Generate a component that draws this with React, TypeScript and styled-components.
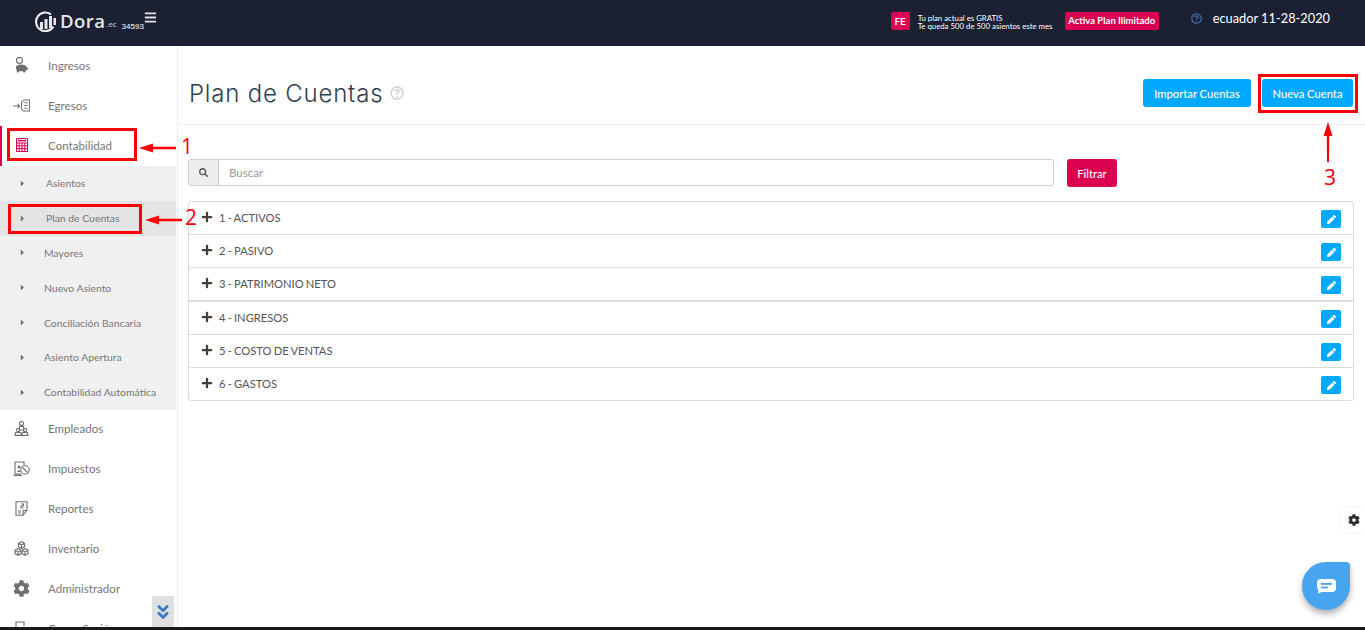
import React from 'react';
import styled, { createGlobalStyle } from 'styled-components';
import { FaCog, FaSearch, FaPlus, FaPen, FaBars, FaCaretRight, FaAngleDoubleDown } from 'react-icons/fa';

const SANS = `Lato, "Open Sans", "Liberation Sans", sans-serif`;
const CRIMSON = '#dc0050';
const BLUE = '#00a8ff';
const RED = '#fb0007';

const GlobalStyle = createGlobalStyle`
  html, body { margin: 0; padding: 0; height: 100%; overflow: hidden; background: #fff; }
  #root { height: 100%; }
  * { box-sizing: border-box; }
`;

const Page = styled.div`
  position: relative;
  display: flex;
  flex-direction: column;
  width: 1365px;
  height: 630px;
  overflow: hidden;
  font-family: ${SANS};
`;

const TopBar = styled.header`
  flex: 0 0 46px;
  display: flex;
  align-items: flex-start;
  background: #1b2132;
  color: #fff;
`;

const Logo = styled.div`
  display: flex;
  align-items: flex-end;
  width: 111px;
  height: 32px;
  margin-left: 33px;
  white-space: nowrap;
`;

const LogoWord = styled.span`
  font-family: "Open Sans", sans-serif;
  font-size: 18.5px;
  line-height: 22px;
  font-weight: 600;
  letter-spacing: 0.5px;
  color: #e6e7ea;
  margin-left: 2px;
`;

const LogoSuffix = styled.span`
  font-size: 8px;
  font-weight: 700;
  color: #aeb1b8;
  margin: 0 0 3px 1px;
`;

const TenantId = styled.span`
  font-family: "Liberation Sans", sans-serif;
  font-size: 8px;
  margin: 0 0 1px 5px;
  color: #fff;
`;

const MenuToggle = styled.div`
  display: flex;
  margin: 11px 0 0 0;
  color: #dfe0e4;
  font-size: 13px;
`;

const TopRight = styled.div`
  display: flex;
  align-items: flex-start;
  margin-left: auto;
  padding: 12px 35px 0 0;
`;

const FeBadge = styled.span`
  width: 19px;
  height: 18px;
  border-radius: 2px;
  background: ${CRIMSON};
  font-size: 10px;
  font-weight: 700;
  line-height: 18px;
  text-align: center;
`;

const PlanNote = styled.div`
  width: 135px;
  margin: 2px 12px 0 8px;
  font-size: 7.8px;
  line-height: 8px;
  white-space: nowrap;
`;

const ActivateButton = styled.span`
  width: 94px;
  height: 18px;
  border-radius: 2px;
  background: ${CRIMSON};
  font-size: 9.5px;
  font-weight: 700;
  line-height: 18px;
  text-align: center;
  white-space: nowrap;
`;

const HelpMark = styled.span`
  width: 11px;
  height: 11px;
  margin: 1px 11px 0 32px;
  color: #4d74b5;
  display: flex;
`;

const DateText = styled.span`
  font-size: 12.8px;
  line-height: 13px;
  white-space: nowrap;
`;

const Body = styled.div`
  flex: 1;
  display: flex;
  min-height: 0;
`;

const Sidebar = styled.nav`
  position: relative;
  flex: 0 0 178px;
  border-right: 1px solid #eeeef0;
  overflow: hidden;
`;

const NavItem = styled.div<{ $active?: boolean }>`
  display: flex;
  align-items: center;
  height: 40px;
  padding: 0 0 2px 11px;
  border-left: 2px solid ${p => (p.$active ? CRIMSON : 'transparent')};
  color: #777;
  font-size: 11.6px;
`;

const NavIcon = styled.span<{ $active?: boolean }>`
  display: flex;
  justify-content: center;
  width: 17px;
  margin-right: 18px;
  font-size: 17px;
  color: ${p => (p.$active ? CRIMSON : '#6f6f6f')};
`;

const SubMenu = styled.div`
  width: 176px;
  background: #f0f0f0;
`;

const SubItem = styled.div<{ $active?: boolean; $wide?: boolean }>`
  display: flex;
  align-items: center;
  height: 34.8px;
  padding-left: 18px;
  background: ${p => (p.$active ? '#e4e4e4' : 'transparent')};
  color: #777;
  font-size: 10.4px;
  svg { flex: none; color: #6f6f6f; font-size: 9px; margin-right: ${p => (p.$wide ? 19 : 17)}px; }
`;

const ScrollDown = styled.div`
  position: absolute;
  left: 152px;
  bottom: 0;
  display: flex;
  align-items: center;
  justify-content: center;
  width: 22px;
  height: 31px;
  background: #e0e0e0;
  color: #3a7cc4;
  font-size: 18px;
`;

const Main = styled.main`
  flex: 1;
  min-width: 0;
`;

const PageHead = styled.div`
  display: flex;
  align-items: center;
  height: 79px;
  padding: 16px 12px 0 11px;
  border-bottom: 1px solid #eeeef3;
`;

const Title = styled.h1`
  margin: 0;
  font-family: Inter, ${SANS};
  font-size: 24px;
  font-weight: 300;
  letter-spacing: 0.8px;
  color: #2f4050;
`;

const TitleHelp = styled.span`
  display: flex;
  margin: 0 auto 0 7px;
  color: #cfcfcf;
`;

const Button = styled.button<{ $width: number; $color?: string; $gapLeft?: number }>`
  width: ${p => p.$width}px;
  height: 28px;
  margin-left: ${p => p.$gapLeft ?? 0}px;
  border: none;
  border-radius: 3px;
  padding: 0;
  background: ${p => p.$color ?? BLUE};
  color: #fff;
  font-family: ${SANS};
  font-size: 11.2px;
  font-weight: 500;
`;

const Content = styled.div`
  padding: 34px 11px 0 10px;
`;

const FilterRow = styled.div`
  display: flex;
  align-items: flex-start;
  margin-bottom: 14px;
`;

const SearchAddon = styled.span`
  display: flex;
  align-items: center;
  justify-content: center;
  width: 31px;
  height: 27px;
  border: 1px solid #cfcfcf;
  border-radius: 3px 0 0 3px;
  background: #eee;
  color: #555;
  font-size: 9px;
`;

const SearchInput = styled.div`
  width: 836px;
  height: 27px;
  margin: 0 13px 0 -1px;
  padding-left: 10px;
  border: 1px solid #cfcfcf;
  border-radius: 0 3px 3px 0;
  background: #fff;
  color: #999;
  font-size: 11.5px;
  line-height: 25px;
`;

const Tree = styled.div`
  width: 1166px;
  border: 1px solid #dcdcdc;
  border-radius: 3px;
`;

const TreeRow = styled.div<{ $thick?: boolean }>`
  display: flex;
  align-items: center;
  height: ${p => (p.$thick ? 34 : 33)}px;
  padding: 0 12px 2px 12px;
  border-bottom: ${p => (p.$thick ? 2 : 1)}px solid #dcdcdc;
  color: #555;
  font-size: 11.2px;
  word-spacing: -0.7px;
  &:last-child { border-bottom: none; height: 32px; }
`;

const Plus = styled.span`
  display: flex;
  width: 18px;
  color: #463f38;
  font-size: 12px;
`;

const EditButton = styled.span`
  display: flex;
  align-items: center;
  justify-content: center;
  width: 20px;
  height: 18px;
  margin: 4px 0 0 auto;
  border-radius: 2px;
  background: ${BLUE};
  color: #fff;
  font-size: 9px;
`;

const BottomStrip = styled.div`
  flex: 0 0 3px;
  background: #1d1a1b;
`;

const SettingsTab = styled.div`
  position: absolute;
  right: 0;
  top: 508px;
  display: flex;
  align-items: center;
  justify-content: center;
  width: 23px;
  height: 24px;
  border-radius: 3px 0 0 3px;
  background: #fff;
  color: #2a2a33;
  font-size: 12px;
  box-shadow: 0 0 4px rgba(0, 0, 0, 0.08);
`;

const ChatBubble = styled.div`
  position: absolute;
  left: 1302px;
  top: 562px;
  display: flex;
  align-items: center;
  justify-content: center;
  width: 48px;
  height: 48px;
  border-radius: 50% 4px 50% 50%;
  background: #46a5ee;
  box-shadow: 0 4px 6px rgba(0, 0, 0, 0.3);
`;

// red marks someone drew on top of the screenshot
const MarkBox = styled.div<{ $x: number; $y: number; $w: number; $h: number }>`
  position: absolute;
  left: ${p => p.$x}px;
  top: ${p => p.$y}px;
  width: ${p => p.$w}px;
  height: ${p => p.$h}px;
  border: 3px solid ${RED};
`;

const MarkNumber = styled.span<{ $x: number; $y: number }>`
  position: absolute;
  left: ${p => p.$x}px;
  top: ${p => p.$y}px;
  color: ${RED};
  font-family: "Open Sans", sans-serif;
  font-size: 21px;
  line-height: 24px;
`;

const MarkArrow = styled.svg<{ $x: number; $y: number }>`
  position: absolute;
  left: ${p => p.$x}px;
  top: ${p => p.$y}px;
`;

const HorizontalArrow = ({ x, y }: { x: number; y: number }) => (
  <MarkArrow $x={x} $y={y} width="37" height="10" viewBox="0 0 37 10">
    <path d="M0 5 L14 0.5 L14 3.8 L37 3.8 L37 6.2 L14 6.2 L14 9.5 Z" fill={RED} />
  </MarkArrow>
);

const Stroke = { fill: 'none', stroke: 'currentColor', strokeWidth: 1.1 };

const PiggyIcon = () => (
  <svg width="13" height="16" viewBox="0 0 13 16">
    <circle cx="4.5" cy="3.5" r="3" {...Stroke} />
    <path d="M1 10 Q1.5 7.5 6 7.5 Q8.5 7.5 10 8.5 L11.5 8.5 L11 10 L13 11 L13 12.5 L11 13 L10.2 15.5 L8.5 15.5 L8 14.3 L4 14.3 L3.5 15.5 L2 15.5 L1.6 13 Q0.6 11.5 1 10 Z" fill="currentColor" />
  </svg>
);

const OutgoingIcon = () => (
  <svg width="18" height="13" viewBox="0 0 18 13">
    <path d="M0 7 L7 7 M4.8 4.8 L7 7 L4.8 9.2" {...Stroke} />
    <path d="M9 3 L12 0.6 H17.4 V12.4 H11 L9 10 Z M12 3.5 h3.5 M12 6.5 h3.5 M12 9.5 h3.5" {...Stroke} />
  </svg>
);

const CalculatorIcon = () => (
  <svg width="12" height="14" viewBox="0 0 12 14">
    <path d="M.5.5 h11 v13 h-11 Z M.5 5 h11 M.5 7.8 h11 M.5 10.6 h11 M3.2 5 v8.5 M6 5 v8.5 M8.8 5 v8.5" fill="none" stroke="currentColor" strokeWidth="1" />
    <rect x="2" y="1.8" width="8" height="1.6" fill="currentColor" />
  </svg>
);

const PeopleIcon = () => (
  <svg width="15" height="15" viewBox="0 0 15 15">
    <circle cx="7.5" cy="2.5" r="2" {...Stroke} />
    <path d="M5 9 L5.5 5.5 H9.5 L10 9 Z" {...Stroke} />
    <circle cx="4" cy="9" r="1.7" {...Stroke} />
    <circle cx="11" cy="9" r="1.7" {...Stroke} />
    <path d="M1 14.4 L1.5 11.5 H6.5 L7.5 14.4 L8.5 11.5 H13.5 L14 14.4 Z" {...Stroke} />
  </svg>
);

const TaxIcon = () => (
  <svg width="17" height="15" viewBox="0 0 17 15">
    <path d="M2 13 V1 H11 V4 M2 13 H8 M0.5 14.4 H9" {...Stroke} />
    <circle cx="12" cy="9" r="4.2" {...Stroke} />
    <path d="M9.5 6.5 L14.5 11.5" {...Stroke} />
    <circle cx="6" cy="6" r="1.5" fill="currentColor" />
    <path d="M4 11 Q6 7.5 8 11 Z" fill="currentColor" />
  </svg>
);

const ReportIcon = () => (
  <svg width="13" height="15" viewBox="0 0 13 15">
    <path d="M1 .7 H12 V9 L8 14.3 H1 Z M8 14.3 V9.5 H12" {...Stroke} />
    <path d="M6 3 H8.5 V5 H6 V7 H8.5 M3 10 H6 M3 12 H6" {...Stroke} />
  </svg>
);

const BoxesIcon = () => (
  <svg width="15" height="15" viewBox="0 0 15 15">
    <path d="M7.5.7 L10.5 2.4 V5.8 L7.5 7.5 L4.5 5.8 V2.4 Z M4.5 2.4 L7.5 4.1 L10.5 2.4 M7.5 4.1 V7.5" {...Stroke} />
    <path d="M4 7.5 L7 9.2 V12.6 L4 14.3 L1 12.6 V9.2 Z M1 9.2 L4 10.9 L7 9.2 M4 10.9 V14.3" {...Stroke} />
    <path d="M11 7.5 L14 9.2 V12.6 L11 14.3 L8 12.6 V9.2 Z M8 9.2 L11 10.9 L14 9.2 M11 10.9 V14.3" {...Stroke} />
  </svg>
);

const LogoutIcon = () => (
  <svg width="15" height="15" viewBox="0 0 15 15">
    <path d="M2 14 V1 H10 V5" {...Stroke} />
  </svg>
);

const mainItems = [
  { label: 'Ingresos', icon: <PiggyIcon /> },
  { label: 'Egresos', icon: <OutgoingIcon /> },
];

const subItems = [
  { label: 'Asientos', wide: true },
  { label: 'Plan de Cuentas', wide: true, active: true },
  { label: 'Mayores' },
  { label: 'Nuevo Asiento' },
  { label: 'Conciliación Bancaria' },
  { label: 'Asiento Apertura' },
  { label: 'Contabilidad Automática' },
];

const lowerItems = [
  { label: 'Empleados', icon: <PeopleIcon /> },
  { label: 'Impuestos', icon: <TaxIcon /> },
  { label: 'Reportes', icon: <ReportIcon /> },
  { label: 'Inventario', icon: <BoxesIcon /> },
  { label: 'Administrador', icon: <FaCog /> },
  { label: 'Cerrar Sesión', icon: <LogoutIcon /> },
];

const accounts = ['1 - ACTIVOS', '2 - PASIVO', '3 - PATRIMONIO NETO', '4 - INGRESOS', '5 - COSTO DE VENTAS', '6 - GASTOS'];

const HelpCircle = ({ size }: { size: number }) => (
  <svg width={size} height={size} viewBox="0 0 14 14">
    <circle cx="7" cy="7" r="6" fill="none" stroke="currentColor" strokeWidth="1.4" />
    <path d="M5 5.5 Q5 3.7 7 3.7 Q9 3.7 9 5.3 Q9 6.3 7.8 6.9 Q7 7.3 7 8.4" fill="none" stroke="currentColor" strokeWidth="1.4" />
    <circle cx="7" cy="10.3" r="0.9" fill="currentColor" />
  </svg>
);

const DoraMark = () => (
  <svg width="25" height="21" viewBox="0 0 25 21">
    <path d="M18 3.4 A9.3 9.3 0 1 0 20.4 15.5" fill="none" stroke="#e6e7ea" strokeWidth="2.2" />
    <rect x="7" y="11" width="3" height="7" fill="#e6e7ea" />
    <rect x="11.5" y="8" width="3" height="10" fill="#e6e7ea" />
    <rect x="16" y="5" width="3" height="12" fill="#e6e7ea" />
    <rect x="20.5" y="7" width="2.5" height="7" fill="#e6e7ea" />
  </svg>
);

const App = () => (
  <Page>
    <GlobalStyle />
    <TopBar>
      <Logo>
        <DoraMark />
        <LogoWord>Dora</LogoWord>
        <LogoSuffix>.ec</LogoSuffix>
        <TenantId>34593</TenantId>
      </Logo>
      <MenuToggle><FaBars /></MenuToggle>
      <TopRight>
        <FeBadge>FE</FeBadge>
        <PlanNote>
          Tu plan actual es GRATIS<br />
          Te queda 500 de 500 asientos este mes
        </PlanNote>
        <ActivateButton>Activa Plan Ilimitado</ActivateButton>
        <HelpMark><HelpCircle size={11} /></HelpMark>
        <DateText>ecuador 11-28-2020</DateText>
      </TopRight>
    </TopBar>

    <Body>
      <Sidebar>
        {mainItems.map(item => (
          <NavItem key={item.label}>
            <NavIcon>{item.icon}</NavIcon>
            {item.label}
          </NavItem>
        ))}
        <NavItem $active>
          <NavIcon $active><CalculatorIcon /></NavIcon>
          Contabilidad
        </NavItem>
        <SubMenu>
          {subItems.map(item => (
            <SubItem key={item.label} $active={item.active} $wide={item.wide}>
              <FaCaretRight />
              {item.label}
            </SubItem>
          ))}
        </SubMenu>
        {lowerItems.map(item => (
          <NavItem key={item.label}>
            <NavIcon>{item.icon}</NavIcon>
            {item.label}
          </NavItem>
        ))}
        <ScrollDown><FaAngleDoubleDown /></ScrollDown>
      </Sidebar>

      <Main>
        <PageHead>
          <Title>Plan de Cuentas</Title>
          <TitleHelp><HelpCircle size={14} /></TitleHelp>
          <Button $width={108}>Importar Cuentas</Button>
          <Button $width={91} $gapLeft={11}>Nueva Cuenta</Button>
        </PageHead>
        <Content>
          <FilterRow>
            <SearchAddon><FaSearch /></SearchAddon>
            <SearchInput>Buscar</SearchInput>
            <Button $width={50} $color={CRIMSON}>Filtrar</Button>
          </FilterRow>
          <Tree>
            {accounts.map((name, i) => (
              <TreeRow key={name} $thick={i === 2}>
                <Plus><FaPlus /></Plus>
                {name}
                <EditButton><FaPen /></EditButton>
              </TreeRow>
            ))}
          </Tree>
        </Content>
      </Main>
    </Body>
    <BottomStrip />

    <SettingsTab><FaCog /></SettingsTab>
    <ChatBubble>
      <svg width="19" height="15" viewBox="0 0 19 15">
        <path d="M4 0 H15 Q19 0 19 4 V9 Q19 13 15 13 H5 L1 14.5 L1.5 11 Q0 10 0 8 V4 Q0 0 4 0 Z" fill="#fff" />
        <rect x="4" y="4" width="11" height="1.8" fill="#46a5ee" />
        <rect x="4" y="7.6" width="7" height="1.8" fill="#46a5ee" />
      </svg>
    </ChatBubble>

    <MarkBox $x={7} $y={128} $w={130} $h={33} />
    <HorizontalArrow x={139} y={143} />
    <MarkNumber $x={181} $y={134}>1</MarkNumber>

    <MarkBox $x={8} $y={204} $w={134} $h={30} />
    <HorizontalArrow x={145} y={215} />
    <MarkNumber $x={185} $y={205}>2</MarkNumber>

    <MarkBox $x={1258} $y={74} $w={100} $h={39} />
    <MarkArrow $x={1323} $y={122} width="10" height="40" viewBox="0 0 10 40">
      <path d="M5 0 L9.5 14 L6.2 14 L6 40 L4 40 L3.8 14 L0.5 14 Z" fill={RED} />
    </MarkArrow>
    <MarkNumber $x={1324} $y={165}>3</MarkNumber>
  </Page>
);

export default App;
